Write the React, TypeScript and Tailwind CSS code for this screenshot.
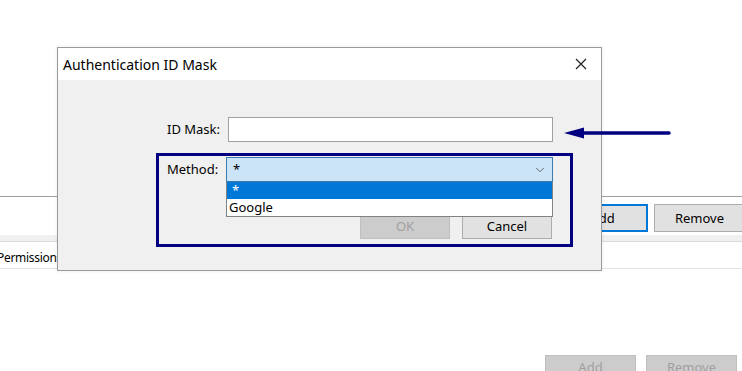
import { ChevronDown } from 'lucide-react'

const font = { fontFamily: '"Noto Sans", "Open Sans", sans-serif' }

function WinButton({ label, variant = 'normal', className = '' }: { label: string; variant?: 'normal' | 'focus' | 'disabled'; className?: string }) {
  const styles = {
    normal: 'bg-[#e1e1e1] border border-[#adadad] text-black',
    focus: 'bg-[#e1e1e1] border-2 border-[#0078d7] text-black',
    disabled: 'bg-[#cccccc] border border-[#bfbfbf] text-[#a0a0a0]',
  }
  return (
    <div className={`flex items-center justify-center text-[13px] leading-none ${styles[variant]} ${className}`}>
      {label}
    </div>
  )
}

export default function App() {
  return (
    <div className="relative w-[742px] h-[371px] overflow-hidden bg-white text-black" style={font}>
      {/* Page behind the dialog */}
      <div className="h-[196px]" />
      <div className="h-px bg-[#a0a0a0]" />
      <div className="flex justify-end gap-[6px] mt-[7px] -mr-[3px]">
        <WinButton label="Add" variant="focus" className="w-[91px] h-[28px]" />
        <WinButton label="Remove" className="w-[91px] h-[28px]" />
      </div>
      <div className="mt-[3px] h-[6px] bg-[#f0f0f0]" />
      <div className="h-px bg-[#dcdcdc]" />
      <div className="h-[26px] flex items-center pt-[5px] -ml-[3px] text-[12px] tracking-[-0.3px]">Permissions</div>
      <div className="h-px bg-[#e3e3e3]" />
      <div className="flex justify-end gap-[10px] mt-[86px] pr-[5px]">
        <WinButton label="Add" variant="disabled" className="w-[91px] h-[25px]" />
        <WinButton label="Remove" variant="disabled" className="w-[91px] h-[25px]" />
      </div>

      {/* Dialog */}
      <div className="absolute left-[57px] top-[47px] w-[545px] h-[224px] border border-[#9a9a9a] flex flex-col shadow-[0_0_4px_rgba(0,0,0,0.08)]">
        <div className="h-[32px] bg-white flex items-center justify-between pl-[5px] pr-[14px]">
          <span className="text-[14px]">Authentication ID Mask</span>
          <svg width="12" height="12" viewBox="0 0 12 12" className="text-[#222]">
            <path d="M1 1 L11 11 M11 1 L1 11" stroke="currentColor" strokeWidth="1.2" />
          </svg>
        </div>
        <div className="flex-1 bg-[#f0f0f0] pt-[37px]">
          <div className="flex items-center pl-[109px]">
            <span className="w-[61px] text-[13px]">ID Mask:</span>
            <div className="w-[325px] h-[25px] bg-white border border-[#a0a0a0]" />
          </div>
          <div className="ml-[98px] mt-[11px] w-[417px] h-[94px] border-[3px] border-[#000080] pt-px">
            <div className="flex items-start pl-[8px]">
              <span className="w-[59px] h-[25px] flex items-center text-[13px]">Method:</span>
              <div className="relative w-[327px] h-[25px]">
                <div className="h-full bg-[#cce4f7] border border-[#3d7bad] flex items-center justify-between pl-[6px] pr-[5px]">
                  <span className="text-[13px] leading-none">*</span>
                  <ChevronDown size={14} strokeWidth={1.5} className="text-[#555]" />
                </div>
                <div className="absolute left-0 top-full w-full bg-white border border-[#828282] border-t-0 z-10">
                  <div className="h-[17px] bg-[#0078d7] text-white text-[13px] flex items-center pl-[5px]">*</div>
                  <div className="h-[17px] text-[13px] flex items-center pl-[2px]">Google</div>
                </div>
              </div>
            </div>
            <div className="flex justify-end gap-[12px] pr-[18px] mt-[32px]">
              <WinButton label="OK" variant="disabled" className="w-[90px] h-[25px]" />
              <WinButton label="Cancel" className="w-[90px] h-[25px]" />
            </div>
          </div>
        </div>
      </div>

      {/* Annotation arrow */}
      <svg className="absolute left-[562px] top-[126px]" width="112" height="14" viewBox="0 0 112 14">
        <path d="M20 7 H107" stroke="#000080" strokeWidth="3.5" strokeLinecap="round" />
        <path d="M2 7 L22 1.5 L22 12.5 Z" fill="#000080" />
      </svg>
    </div>
  )
}
